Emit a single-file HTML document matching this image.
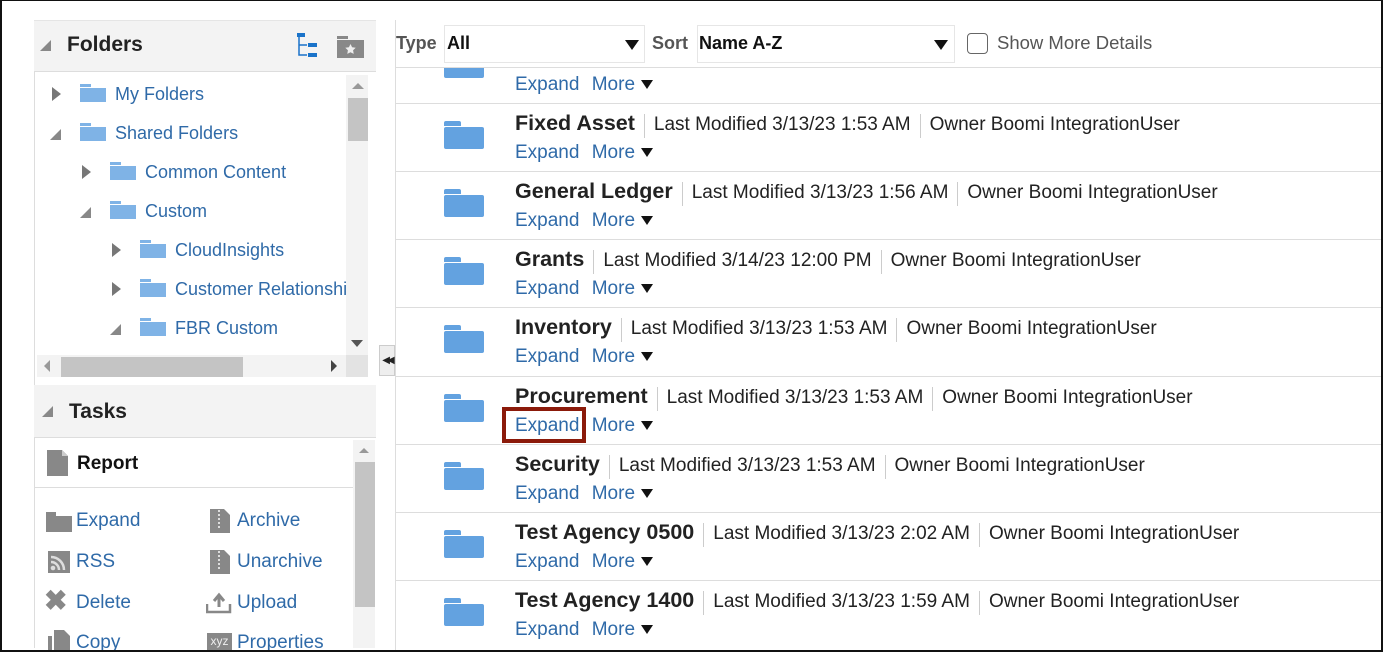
<!DOCTYPE html>
<html><head><meta charset="utf-8"><style>
*{margin:0;padding:0;box-sizing:border-box}
body{width:1383px;height:652px;overflow:hidden;background:#fff;font-family:"Liberation Sans",Arial,sans-serif;position:relative}
.a{position:absolute;white-space:nowrap}
.lnk{color:#2f6aa8}
.tf{position:absolute;width:26px;height:18px}
.tf:before{content:"";position:absolute;left:0;top:0;width:11px;height:3px;background:#7fb3e6}
.tf:after{content:"";position:absolute;left:0;top:4px;width:26px;height:14px;background:#7fb3e6}
.rt{position:absolute;width:0;height:0;border-left:9px solid #777;border-top:7px solid transparent;border-bottom:7px solid transparent}
.dt{position:absolute;width:0;height:0;border-right:11px solid #888;border-top:11px solid transparent}
.bf{position:absolute;width:40px;height:28px}
.bf:before{content:"";position:absolute;left:0;top:0;width:17px;height:5px;background:#63a2e0;border-radius:2px 2px 0 0}
.bf:after{content:"";position:absolute;left:0;top:6px;width:40px;height:22px;background:#63a2e0;border-radius:2px}
.row{position:absolute;left:396px;width:985px;height:68px;border-top:1px solid #ddd}
.ttl{font-weight:bold;font-size:21.5px;color:#222}
.meta{font-size:19px;color:#222}
.sep{display:inline-block;width:1px;height:24px;background:#ccc;vertical-align:middle;margin:0 9px}
.el{font-size:19px;color:#2f6aa8}
.dn{display:inline-block;width:0;height:0;border-left:6px solid transparent;border-right:6px solid transparent;border-top:9px solid #111;margin-left:6px;vertical-align:middle}
</style></head><body>
<div class="a" style="left:0;top:0;width:1383px;height:652px;border:2px solid #111;z-index:50;border-top-width:1px"></div>

<div class="a" style="left:34px;top:20px;width:342px;height:52px;background:#f3f3f3;border-bottom:1px solid #ddd;border-top:1px solid #e5e5e5"></div>
<div class="dt" style="left:40px;top:40px"></div>
<div class="a" style="left:67px;top:33px;font-size:21px;font-weight:bold;color:#222">Folders</div>
<svg class="a" style="left:297px;top:33px" width="24" height="26"><rect x="0" y="0" width="8" height="4" fill="#1a73c9"/><path d="M2 4V22H10M2 12H10" stroke="#1a73c9" stroke-width="1.5" fill="none"/><rect x="11" y="10" width="9" height="4" fill="#1a73c9"/><rect x="11" y="20" width="9" height="4" fill="#1a73c9"/></svg>
<svg class="a" style="left:337px;top:36px" width="27" height="22"><rect x="0" y="0" width="11" height="3" fill="#888"/><rect x="0" y="4" width="27" height="18" fill="#888"/><path d="M13.5 8l1.6 3.3 3.6.5-2.6 2.5.6 3.6-3.2-1.7-3.2 1.7.6-3.6-2.6-2.5 3.6-.5z" fill="#eee"/></svg>
<div class="a" style="left:34px;top:72px;width:1px;height:576px;background:#ddd"></div>

<div class="rt" style="left:52px;top:87px"></div><div class="tf" style="left:80px;top:84px"></div><div class="a lnk" style="left:115px;top:84px;font-size:18px">My Folders</div>
<div class="dt" style="left:50px;top:129px"></div><div class="tf" style="left:80px;top:123px"></div><div class="a lnk" style="left:115px;top:123px;font-size:18px">Shared Folders</div>
<div class="rt" style="left:82px;top:165px"></div><div class="tf" style="left:110px;top:162px"></div><div class="a lnk" style="left:145px;top:162px;font-size:18px">Common Content</div>
<div class="dt" style="left:80px;top:207px"></div><div class="tf" style="left:110px;top:201px"></div><div class="a lnk" style="left:145px;top:201px;font-size:18px">Custom</div>
<div class="rt" style="left:112px;top:243px"></div><div class="tf" style="left:140px;top:240px"></div><div class="a lnk" style="left:175px;top:240px;font-size:18px">CloudInsights</div>
<div class="rt" style="left:112px;top:282px"></div><div class="tf" style="left:140px;top:279px"></div><div class="a lnk" style="left:175px;top:279px;font-size:18px;width:171px;overflow:hidden">Customer Relationship</div>
<div class="dt" style="left:110px;top:324px"></div><div class="tf" style="left:140px;top:318px"></div><div class="a lnk" style="left:175px;top:318px;font-size:18px">FBR Custom</div>

<div class="a" style="left:346px;top:75px;width:22px;height:280px;background:#f3f3f3"></div>
<div class="a" style="left:352px;top:83px;border-left:6px solid transparent;border-right:6px solid transparent;border-bottom:6px solid #999;width:0;height:0"></div>
<div class="a" style="left:348px;top:98px;width:20px;height:43px;background:#c4c4c4"></div>
<div class="a" style="left:351px;top:340px;border-left:6px solid transparent;border-right:6px solid transparent;border-top:7px solid #555;width:0;height:0"></div>
<div class="a" style="left:37px;top:355px;width:309px;height:22px;background:#f3f3f3"></div>
<div class="a" style="left:346px;top:355px;width:22px;height:22px;background:#e3e3e3"></div>
<div class="a" style="left:44px;top:360px;border-top:6px solid transparent;border-bottom:6px solid transparent;border-right:6px solid #999;width:0;height:0"></div>
<div class="a" style="left:61px;top:357px;width:182px;height:20px;background:#c4c4c4"></div>
<div class="a" style="left:331px;top:360px;border-top:6px solid transparent;border-bottom:6px solid transparent;border-left:6px solid #444;width:0;height:0"></div>
<div class="a" style="left:379px;top:345px;width:16px;height:31px;background:#eee;border:1px solid #ccc;font-size:10px;line-height:29px;text-align:center;color:#222;letter-spacing:-3px">◀◀</div>

<div class="a" style="left:34px;top:385px;width:342px;height:53px;background:#f3f3f3;border-bottom:1px solid #ddd"></div>
<div class="dt" style="left:42px;top:406px"></div>
<div class="a" style="left:69px;top:400px;font-size:21px;font-weight:bold;color:#222">Tasks</div>
<div class="a" style="left:35px;top:439px;width:318px;height:49px;border-bottom:1px solid #ddd"></div>
<svg class="a" style="left:47px;top:450px" width="22" height="26"><path d="M0 0H15L21 6V26H0Z" fill="#888"/><path d="M15 0V6H21" fill="#ccc"/></svg>
<div class="a" style="left:77px;top:453px;font-size:19px;font-weight:bold;color:#111">Report</div>
<div class="a" style="left:353px;top:440px;width:22px;height:208px;background:#f3f3f3"></div>
<div class="a" style="left:359px;top:448px;border-left:5px solid transparent;border-right:5px solid transparent;border-bottom:5px solid #999;width:0;height:0"></div>
<div class="a" style="left:355px;top:462px;width:20px;height:145px;background:#c4c4c4"></div>

<svg class="a" style="left:46px;top:512px" width="26" height="20"><rect x="0" y="0" width="10" height="4" fill="#888"/><rect x="0" y="4" width="26" height="16" fill="#888"/></svg>
<div class="a lnk" style="left:76px;top:510px;font-size:19px">Expand</div>
<svg class="a" style="left:48px;top:551px" width="22" height="22"><rect width="22" height="22" fill="#888"/><path d="M3 6a13 13 0 0 1 13 13M3 11a8 8 0 0 1 8 8" stroke="#ddd" stroke-width="2.5" fill="none"/><circle cx="5" cy="17" r="2.3" fill="#ddd"/></svg>
<div class="a lnk" style="left:76px;top:551px;font-size:19px">RSS</div>
<div class="a" style="left:44px;top:587px;font-size:28px;color:#888;font-weight:bold;line-height:28px">✖</div>
<div class="a lnk" style="left:76px;top:592px;font-size:19px">Delete</div>
<svg class="a" style="left:48px;top:630px" width="24" height="22"><path d="M6 0H16L22 6V22H6Z" fill="#888"/><rect x="0" y="6" width="4" height="16" fill="#888"/></svg>
<div class="a lnk" style="left:76px;top:632px;font-size:19px">Copy</div>

<svg class="a" style="left:210px;top:509px" width="20" height="24"><path d="M0 0H14L20 6V24H0Z" fill="#888"/><path d="M9 1v20" stroke="#ddd" stroke-width="2" stroke-dasharray="2 2"/></svg>
<div class="a lnk" style="left:237px;top:510px;font-size:19px">Archive</div>
<svg class="a" style="left:210px;top:550px" width="20" height="24"><path d="M0 0H14L20 6V24H0Z" fill="#888"/><path d="M9 1v20" stroke="#ddd" stroke-width="2" stroke-dasharray="2 2"/></svg>
<div class="a lnk" style="left:237px;top:551px;font-size:19px">Unarchive</div>
<svg class="a" style="left:206px;top:592px" width="26" height="22"><path d="M1 12V20H24V12" stroke="#888" stroke-width="2.5" fill="none"/><path d="M13 15V5M8 9L13 3 18 9" stroke="#888" stroke-width="3" fill="none"/></svg>
<div class="a lnk" style="left:237px;top:592px;font-size:19px">Upload</div>
<div class="a" style="left:207px;top:633px;width:25px;height:17px;background:#888;color:#eee;font-size:12px;line-height:17px;text-align:center">xyz</div>
<div class="a lnk" style="left:237px;top:632px;font-size:19px">Properties</div>

<div class="a" style="left:395px;top:20px;width:1px;height:630px;background:#ddd"></div>
<div class="a" style="left:396px;top:33px;font-size:18px;font-weight:bold;color:#555">Type</div>
<div class="a" style="left:444px;top:25px;width:201px;height:38px;border:1px solid #e6e6e6"></div>
<div class="a" style="left:447px;top:33px;font-size:18px;font-weight:bold;color:#111">All</div>
<div class="a" style="left:625px;top:40px;border-left:7px solid transparent;border-right:7px solid transparent;border-top:10px solid #111;width:0;height:0"></div>
<div class="a" style="left:652px;top:33px;font-size:18px;font-weight:bold;color:#555">Sort</div>
<div class="a" style="left:697px;top:25px;width:258px;height:38px;border:1px solid #e6e6e6"></div>
<div class="a" style="left:699px;top:33px;font-size:18px;font-weight:bold;color:#111">Name A-Z</div>
<div class="a" style="left:934px;top:40px;border-left:7px solid transparent;border-right:7px solid transparent;border-top:10px solid #111;width:0;height:0"></div>
<div class="a" style="left:967px;top:33px;width:21px;height:21px;border:1.5px solid #666;border-radius:4px"></div>
<div class="a" style="left:997px;top:32px;font-size:18.5px;color:#555">Show More Details</div>

<div class="row" style="top:67px;height:36px;overflow:hidden">
<div class="bf" style="left:48px;top:-18px"></div>
<div class="a el" style="left:119px;top:6px">Expand <span style="margin-left:7px">More</span><span class="dn"></span></div>
</div>

<div class="row" style="top:103px"><div class="bf" style="left:48px;top:17px"></div><div class="a" style="left:119px;top:7px"><span class="ttl">Fixed Asset</span><span class="sep"></span><span class="meta">Last Modified 3/13/23 1:53 AM</span><span class="sep"></span><span class="meta">Owner Boomi IntegrationUser</span></div><div class="a el" style="left:119px;top:38px">Expand <span style="margin-left:7px">More</span><span class="dn"></span></div></div>

<div class="row" style="top:171px"><div class="bf" style="left:48px;top:17px"></div><div class="a" style="left:119px;top:7px"><span class="ttl">General Ledger</span><span class="sep"></span><span class="meta">Last Modified 3/13/23 1:56 AM</span><span class="sep"></span><span class="meta">Owner Boomi IntegrationUser</span></div><div class="a el" style="left:119px;top:38px">Expand <span style="margin-left:7px">More</span><span class="dn"></span></div></div>

<div class="row" style="top:239px"><div class="bf" style="left:48px;top:17px"></div><div class="a" style="left:119px;top:7px"><span class="ttl">Grants</span><span class="sep"></span><span class="meta">Last Modified 3/14/23 12:00 PM</span><span class="sep"></span><span class="meta">Owner Boomi IntegrationUser</span></div><div class="a el" style="left:119px;top:38px">Expand <span style="margin-left:7px">More</span><span class="dn"></span></div></div>

<div class="row" style="top:307px"><div class="bf" style="left:48px;top:17px"></div><div class="a" style="left:119px;top:7px"><span class="ttl">Inventory</span><span class="sep"></span><span class="meta">Last Modified 3/13/23 1:53 AM</span><span class="sep"></span><span class="meta">Owner Boomi IntegrationUser</span></div><div class="a el" style="left:119px;top:38px">Expand <span style="margin-left:7px">More</span><span class="dn"></span></div></div>

<div class="row" style="top:376px"><div class="bf" style="left:48px;top:17px"></div><div class="a" style="left:119px;top:7px"><span class="ttl">Procurement</span><span class="sep"></span><span class="meta">Last Modified 3/13/23 1:53 AM</span><span class="sep"></span><span class="meta">Owner Boomi IntegrationUser</span></div><div class="a el" style="left:119px;top:38px">Expand <span style="margin-left:7px">More</span><span class="dn"></span></div>
<div class="a" style="left:106px;top:30px;width:84px;height:36px;border:4px solid #8b1a0a"></div></div>

<div class="row" style="top:444px"><div class="bf" style="left:48px;top:17px"></div><div class="a" style="left:119px;top:7px"><span class="ttl">Security</span><span class="sep"></span><span class="meta">Last Modified 3/13/23 1:53 AM</span><span class="sep"></span><span class="meta">Owner Boomi IntegrationUser</span></div><div class="a el" style="left:119px;top:38px">Expand <span style="margin-left:7px">More</span><span class="dn"></span></div></div>

<div class="row" style="top:512px"><div class="bf" style="left:48px;top:17px"></div><div class="a" style="left:119px;top:7px"><span class="ttl">Test Agency 0500</span><span class="sep"></span><span class="meta">Last Modified 3/13/23 2:02 AM</span><span class="sep"></span><span class="meta">Owner Boomi IntegrationUser</span></div><div class="a el" style="left:119px;top:38px">Expand <span style="margin-left:7px">More</span><span class="dn"></span></div></div>

<div class="row" style="top:580px"><div class="bf" style="left:48px;top:17px"></div><div class="a" style="left:119px;top:7px"><span class="ttl">Test Agency 1400</span><span class="sep"></span><span class="meta">Last Modified 3/13/23 1:59 AM</span><span class="sep"></span><span class="meta">Owner Boomi IntegrationUser</span></div><div class="a el" style="left:119px;top:38px">Expand <span style="margin-left:7px">More</span><span class="dn"></span></div></div>
</body></html>
